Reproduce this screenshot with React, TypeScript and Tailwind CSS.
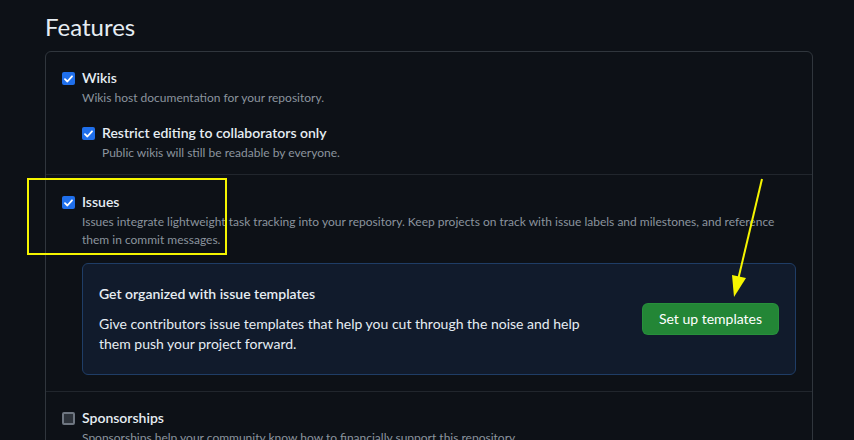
import React from 'react';

function CheckBox({ checked }: { checked: boolean }) {
  if (!checked) {
    return (
      <span className="mt-[4px] block h-[13px] w-[13px] shrink-0 rounded-[2px] border-2 border-[#6e7681] bg-[#2d333b]" />
    );
  }
  return (
    <span className="mt-[4px] flex h-[13px] w-[13px] shrink-0 items-center justify-center rounded-[2px] bg-[#1f6feb]">
      <svg width="9" height="8" viewBox="0 0 9 8" fill="none">
        <path d="M1 4.2 L3.4 6.5 L8 1.3" stroke="white" strokeWidth="1.8" strokeLinecap="round" strokeLinejoin="round" />
      </svg>
    </span>
  );
}

function Option({ checked, title, desc }: { checked: boolean; title: string; desc: string }) {
  return (
    <div className="flex gap-[7px]">
      <CheckBox checked={checked} />
      <div>
        <p className="text-[14px] font-semibold leading-[20px] text-[#e6edf3]">{title}</p>
        <p className="mt-[1px] text-[12px] leading-[18px] text-[#8b949e]">{desc}</p>
      </div>
    </div>
  );
}

export default function App() {
  return (
    <div
      className="relative h-[440px] w-[854px] overflow-hidden bg-[#0d1117] pl-[45px] pr-[41px]"
      style={{ fontFamily: 'Lato, "Noto Sans", sans-serif' }}
    >
      <h2 className="pt-[9px] text-[24px] leading-[36px] text-[#e6edf3]">Features</h2>

      <div className="mt-[6px] rounded-md border border-[#30363d]">
        <div className="px-[16px] pb-[12px] pt-[16px]">
          <Option checked title="Wikis" desc="Wikis host documentation for your repository." />
          <div className="ml-[20px] mt-[16px]">
            <Option checked title="Restrict editing to collaborators only" desc="Public wikis will still be readable by everyone." />
          </div>
        </div>

        <div className="border-t border-[#21262d] px-[16px] pb-[16px] pt-[17px]">
          <Option
            checked
            title="Issues"
            desc="Issues integrate lightweight task tracking into your repository. Keep projects on track with issue labels and milestones, and reference them in commit messages."
          />
          <div className="ml-[20px] mt-[14px] flex items-center justify-between rounded-md border border-[#1f3d66] bg-[#111b2c] py-[20px] pl-[16px] pr-[16px]">
            <div className="w-[500px]">
              <p className="text-[14px] font-semibold leading-[20px] text-[#e6edf3]">Get organized with issue templates</p>
              <p className="mt-[10px] text-[14px] leading-[20px] text-[#e6edf3]">
                Give contributors issue templates that help you cut through the noise and help them push your project forward.
              </p>
            </div>
            <button
              type="button"
              className="h-[32px] rounded-md border border-[#2ea043]/40 bg-[#238636] px-[16px] text-[14px] leading-[20px] text-white"
            >
              Set up templates
            </button>
          </div>
        </div>

        <div className="border-t border-[#21262d] px-[16px] pt-[16px]">
          <Option
            checked={false}
            title="Sponsorships"
            desc="Sponsorships help your community know how to financially support this repository."
          />
        </div>
      </div>

      {/* annotation overlays */}
      <div className="absolute left-[27px] top-[178px] h-[77px] w-[200px] border-2 border-[#f5f500]" />
      <svg className="absolute left-0 top-0" width="854" height="440" viewBox="0 0 854 440">
        <line x1="762" y1="179" x2="738" y2="280" stroke="#f5f500" strokeWidth="2" />
        <polygon points="732,275 746,278 734,297" fill="#f5f500" />
      </svg>
    </div>
  );
}
